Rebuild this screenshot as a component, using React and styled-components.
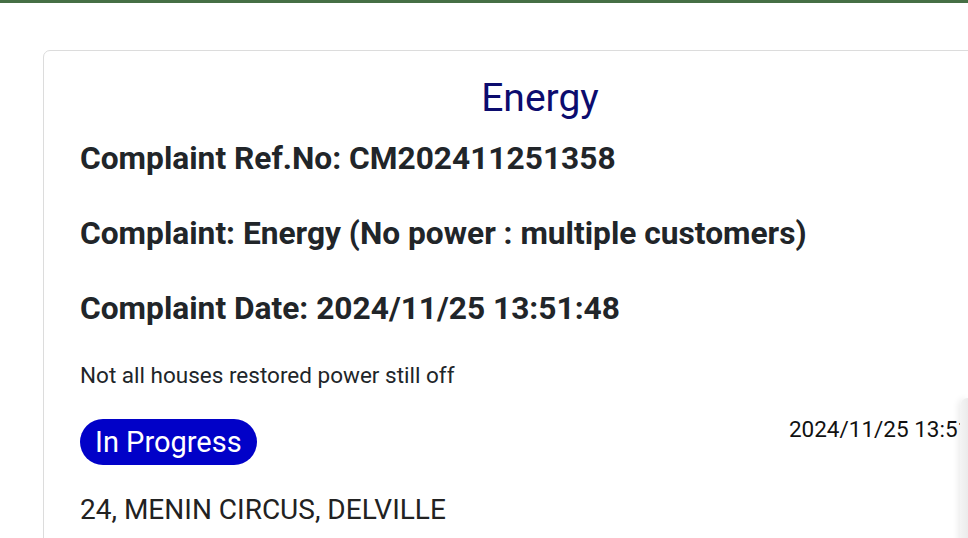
import React from "react";
import styled, { createGlobalStyle } from "styled-components";

const GlobalStyle = createGlobalStyle`
  html, body {
    margin: 0;
    padding: 0;
    background: #ffffff;
    overflow: hidden;
  }
  body {
    font-family: Roboto, "Liberation Sans", Arial, sans-serif;
    color: #212529;
  }
`;

const TopBar = styled.div`
  height: 3px;
  background-color: #466f45;
`;

const Page = styled.div`
  position: relative;
  width: 968px;
  height: 535px;
  overflow: hidden;
  padding: 47px 0 0 43px;
  box-sizing: border-box;
`;

const Card = styled.div`
  width: 994px;
  border: 1px solid #dcdcdc;
  border-radius: 7px;
  box-sizing: border-box;
  padding: 23px 36px 30px 36px;
  background-color: #ffffff;
`;

const Title = styled.div`
  text-align: center;
  font-size: 39px;
  color: #0c0c6e;
  line-height: 48px;
`;

const InfoLine = styled.div`
  font-size: 31.7px;
  font-weight: 700;
  line-height: 40px;
  margin-top: ${(p) => p.gap}px;
`;

const Description = styled.div`
  font-size: 22.5px;
  line-height: 30px;
  margin-top: 31px;
`;

const StatusRow = styled.div`
  display: flex;
  justify-content: space-between;
  align-items: flex-start;
  margin-top: 29px;
`;

const Badge = styled.span`
  display: inline-block;
  background-color: #0101c8;
  color: #ffffff;
  font-size: 29px;
  line-height: 46px;
  padding: 0 15px;
  border-radius: 23px;
`;

const StatusDate = styled.div`
  font-size: 22.5px;
  color: #111111;
  line-height: 20px;
  white-space: nowrap;
  margin-right: -1px;
`;

const Address = styled.div`
  font-size: 28px;
  line-height: 36px;
  margin-top: 27px;
  color: #222222;
`;

const SidePanel = styled.div`
  position: absolute;
  right: 0;
  top: 395px;
  width: 8px;
  height: 160px;
  background: linear-gradient(to right, #f4f4f4, #ebebeb);
  border-top-left-radius: 8px;
  box-shadow: -2px 0 6px rgba(0, 0, 0, 0.08);
`;

export default function App() {
  return (
    <>
      <GlobalStyle />
      <TopBar />
      <Page>
        <Card>
          <Title>Energy</Title>
          <InfoLine gap={17}>Complaint Ref.No: CM202411251358</InfoLine>
          <InfoLine gap={35}>
            Complaint: Energy (No power : multiple customers)
          </InfoLine>
          <InfoLine gap={35}>Complaint Date: 2024/11/25 13:51:48</InfoLine>
          <Description>Not all houses restored power still off</Description>
          <StatusRow>
            <Badge>In Progress</Badge>
            <StatusDate>2024/11/25 13:51:48</StatusDate>
          </StatusRow>
          <Address>24, MENIN CIRCUS, DELVILLE</Address>
        </Card>
        <SidePanel />
      </Page>
    </>
  );
}
